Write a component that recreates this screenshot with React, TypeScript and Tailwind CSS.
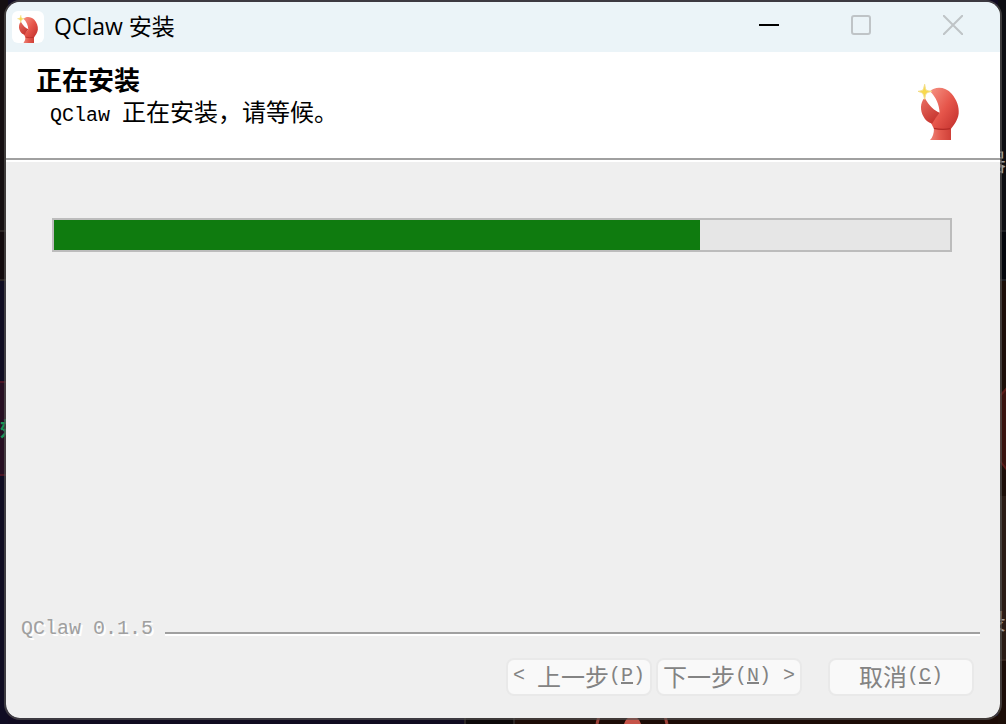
import type { ReactNode } from 'react';

function ClawIcon({ className }: { className: string }) {
  return (
    <svg viewBox="42 27 126 168" className={className} aria-hidden="true">
      <defs>
        <linearGradient id="claw" x1="0" y1="0" x2="1" y2="1">
          <stop offset="0" stopColor="#f59384" />
          <stop offset="0.5" stopColor="#e6564b" />
          <stop offset="1" stopColor="#bf2c29" />
        </linearGradient>
        <linearGradient id="thumb" x1="0" y1="0" x2="0.6" y2="1">
          <stop offset="0" stopColor="#ea7064" />
          <stop offset="1" stopColor="#c6342e" />
        </linearGradient>
        <linearGradient id="wrist" x1="0" y1="0" x2="1" y2="0">
          <stop offset="0" stopColor="#ee8377" />
          <stop offset="0.5" stopColor="#e2594d" />
          <stop offset="1" stopColor="#cf4038" />
        </linearGradient>
      </defs>
      <path d="M90 158 H141 V195 H78 Q90 184 90 158Z" fill="url(#wrist)" />
      <path
        d="M78 49 C92 34 124 34 143 56 C158 74 166 94 164 116 C161 136 151 148 140 163 Q115 168 90 162 L80 142 L107 114 C106 90 96 66 78 49Z"
        fill="url(#claw)"
      />
      <path
        d="M62 68 C47 84 49 108 58 124 C64 136 72 142 84 146 Q94 128 108 113 C92 107 76 94 62 68Z"
        fill="url(#thumb)"
      />
      <path d="M90 160 Q115 166 139 161" fill="none" stroke="#b32a26" strokeWidth="4" />
      <path
        d="M62 28 Q64 44 67 46 Q70 48 83 49 Q70 52 67 55 Q64 58 62 73 Q59 58 56 55 Q53 52 42 49 Q53 48 56 46 Q59 43 62 28Z"
        fill="#f8d94c"
        stroke="#f3dd86"
        strokeWidth="3"
      />
    </svg>
  );
}

function Desktop() {
  return (
    <div className="absolute inset-0 -z-10 overflow-hidden bg-[#100a20]" aria-hidden="true">
      <svg className="absolute left-0 top-0 h-[724px] w-2" viewBox="0 0 8 724">
        <path fill="#150f11" d="M0 0h8v724H0z" />
        <path fill="#2a2423" d="M0 230h8v2H0z" />
        <path fill="#120a0d" d="M0 232h8v47H0z" />
        <path fill="#2a2423" d="M0 279h8v2H0z" />
        <path fill="#0f0c22" d="M0 281h8v443H0z" />
        <path fill="#4a1424" d="M0 381h8v95H0z" />
        <path fill="#260f22" d="M0 383h8v91H0z" />
      </svg>
      <svg className="absolute bottom-0 right-0 h-2 w-[542px]" viewBox="0 0 542 8">
        <path fill="#2a2423" d="M0 0h542v8H0z" />
        <path fill="#0c0809" d="M2 0h47v8H2z" />
        <path fill="#1c0b06" d="M51 0h491v8H51z" />
        <path stroke="#9c4038" strokeWidth="3" d="M133 8l2-8M203 8l-2-8" />
        <path fill="#c55348" d="M160 8q2-6 6-7h5q4 1 6 7z" />
      </svg>
      <svg className="absolute right-0 top-0 h-[724px] w-2" viewBox="0 0 8 724">
        <path fill="#0d0e12" d="M0 0h8v230H0z" />
        <path fill="#1e1f24" d="M0 230h8v2H0z" />
        <path fill="#04060c" d="M0 232h8v47H0z" />
        <path fill="#1e1f24" d="M0 279h8v2H0z" />
        <path fill="#1c0e08" d="M0 281h8v443H0z" />
        <path fill="#3a120e" stroke="#5b1b18" strokeWidth="2" d="M9 388L2 396v65l7 9z" />
        <path fill="#2a1b15" d="M0 496h8v163H0z" />
        <path fill="#35241d" d="M0 659h8v2H0z" />
      </svg>
      <span className="absolute left-0 top-[417px] font-['Noto_Sans_CJK_SC',sans-serif] text-xl/6 font-bold text-[#159455]">
        效
      </span>
      <span className="absolute right-0 top-[149px] font-['Noto_Sans_CJK_SC',sans-serif] text-2xl/6 text-[#a0a1a5]">
        器
      </span>
      <span className="absolute right-0 top-[608px] font-['Noto_Sans_CJK_SC',sans-serif] text-2xl/6 text-[#a09996]">
        录
      </span>
    </div>
  );
}

function Latin({ children }: { children: ReactNode }) {
  return <span className="font-['Liberation_Mono',monospace] text-xl/6">{children}</span>;
}

function WizardButton({ children }: { children: ReactNode }) {
  return (
    <button
      type="button"
      disabled
      className="flex h-[38px] w-[146px] items-center justify-center whitespace-pre rounded-lg border-2 border-[#e9e9e9] bg-[#f9f9f9] pb-0.5 text-2xl/6 text-[#838383]"
    >
      {children}
    </button>
  );
}

function TitleBar() {
  return (
    <header className="flex h-[50px] shrink-0 items-center bg-[#ebf4f8] pl-1.5">
      <div className="flex size-8 items-end justify-center rounded-md bg-white">
        <ClawIcon className="h-7 w-[22px]" />
      </div>
      <h1 className="ml-2.5 flex-1 pb-0.5 font-['Open_Sans','Noto_Sans_CJK_SC',sans-serif] text-[23px]/8 text-black">
        QClaw 安装
      </h1>
      <div className="flex self-start pr-px">
        <button type="button" aria-label="最小化" className="flex h-[46px] w-[92px] items-center justify-center">
          <svg className="size-5" viewBox="0 0 20 20">
            <path d="M0 10h20" stroke="#000" strokeWidth="2" />
          </svg>
        </button>
        <button type="button" disabled aria-label="最大化" className="flex h-[46px] w-[92px] items-center justify-center">
          <svg className="size-5" viewBox="0 0 20 20" fill="none" stroke="#bfc4c7" strokeWidth="2">
            <rect x="1" y="1" width="18" height="18" rx="2" />
          </svg>
        </button>
        <button type="button" disabled aria-label="关闭" className="flex h-[46px] w-[92px] items-center justify-center">
          <svg className="size-5" viewBox="0 0 20 20" fill="none" stroke="#bfc4c7" strokeWidth="2">
            <path d="M0 0l20 20M20 0L0 20" />
          </svg>
        </button>
      </div>
    </header>
  );
}

export default function App() {
  return (
    <div className="relative isolate flex min-h-screen px-1 pb-1">
      <Desktop />
      <main className="flex flex-1 flex-col overflow-hidden rounded-2xl border-2 border-[#565453]/65 bg-[#efefef] bg-clip-padding font-['Noto_Sans_CJK_SC',sans-serif]">
        <TitleBar />

        <section className="flex h-[106px] shrink-0 items-start justify-between bg-white pl-[30px] pr-10 text-black">
          <div className="pt-[11px]">
            <h2 className="text-[26px]/8 font-bold">正在安装</h2>
            <p className="whitespace-pre pl-3.5 text-2xl/8">
              <Latin>QClaw </Latin>正在安装，请等候。
            </p>
          </div>
          <ClawIcon className="mt-8 h-14 w-[42px]" />
        </section>
        <div className="h-1 shrink-0 border-b-2 border-t-2 border-b-white border-t-[#a0a0a0]" />

        <section className="flex-1 pl-[46px] pr-12 pt-14">
          <progress
            aria-label="安装进度"
            value={721}
            max={1000}
            className="block h-[34px] w-full appearance-none border-2 border-[#bcbcbc] bg-[#e6e6e6] [&::-webkit-progress-bar]:bg-[#e6e6e6] [&::-webkit-progress-value]:bg-[#0f7b0f]"
          />
        </section>

        <footer>
          <div className="flex items-center gap-3 pl-[15px] pr-5 text-[#a0a0a0]">
            <span className="whitespace-pre [text-shadow:2px_2px_0_#fff]">
              <Latin>QClaw 0.1.5</Latin>
            </span>
            <div className="mt-3 h-1 flex-1 border-b-2 border-t-2 border-b-white border-t-[#a0a0a0]" />
          </div>
          <div className="flex justify-end gap-1 pb-[22px] pr-[26px] pt-[17px]">
            <WizardButton>
              <Latin>&lt; </Latin>上一步<Latin>(<u>P</u>)</Latin>
            </WizardButton>
            <WizardButton>
              下一步<Latin>(<u>N</u>) &gt;</Latin>
            </WizardButton>
            <div className="ml-[22px]">
              <WizardButton>
                取消<Latin>(<u>C</u>)</Latin>
              </WizardButton>
            </div>
          </div>
        </footer>
      </main>
    </div>
  );
}
